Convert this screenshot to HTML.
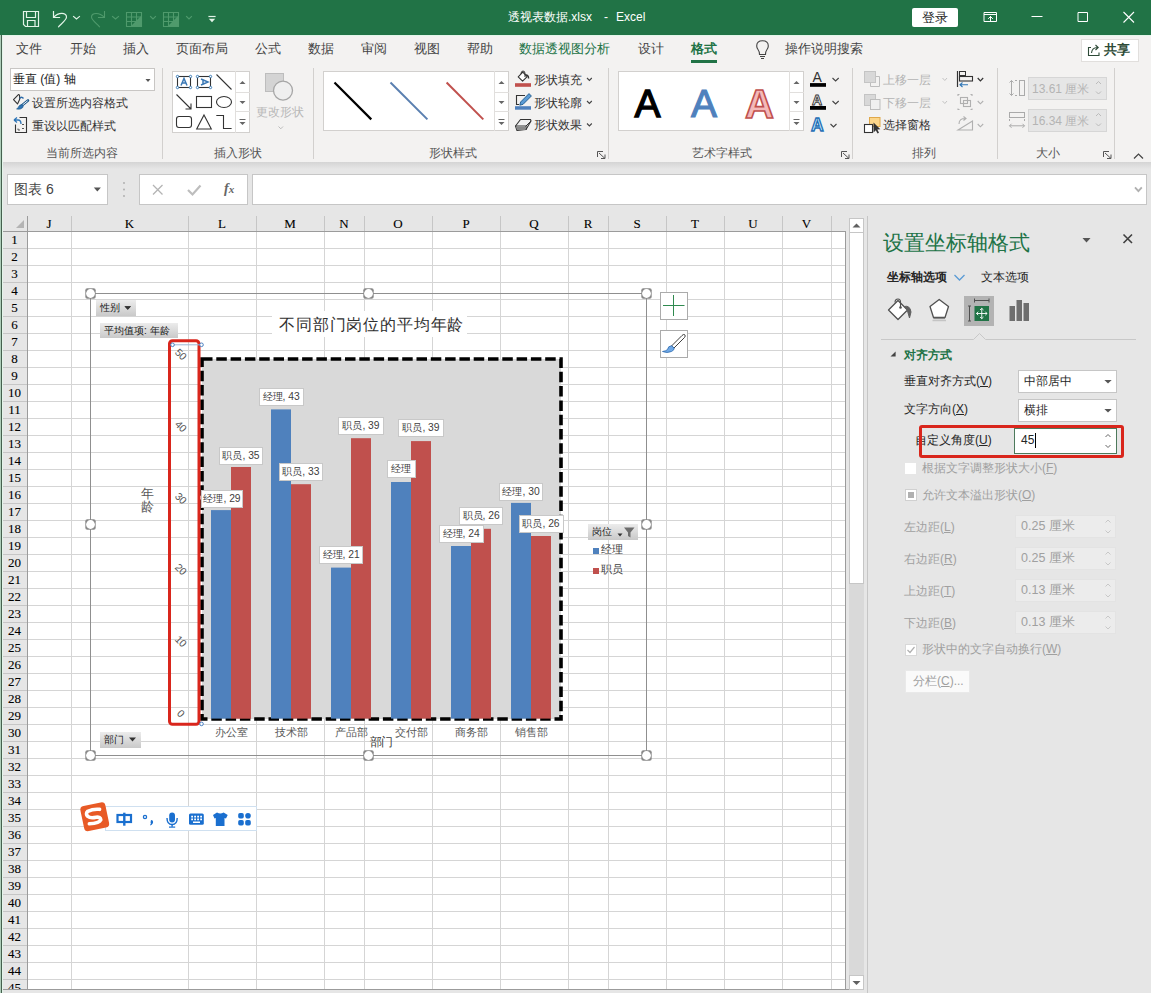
<!DOCTYPE html><html><head><meta charset="utf-8"><style>
*{box-sizing:border-box}
body{margin:0;width:1151px;height:993px;position:relative;overflow:hidden;background:#e6e6e6;font-family:'Liberation Sans',sans-serif;color:#262626}
.ab{position:absolute}
.t{position:absolute;white-space:nowrap;line-height:1}
</style></head><body>
<div class="ab" style="left:0;top:0;width:1151px;height:35px;background:#217346"></div>
<div class="t" style="left:508px;top:11px;font-size:12px;color:#fff">透视表数据.xlsx</div>
<div class="t" style="left:604px;top:11px;font-size:12px;color:#fff">-</div>
<div class="t" style="left:616px;top:11px;font-size:12px;color:#fff">Excel</div>
<div class="ab" style="left:912px;top:8px;width:46px;height:19px;background:#fff;border-radius:2px"></div>
<div class="t" style="left:922px;top:11px;font-size:13px;color:#262626">登录</div>
<svg class="ab" style="left:0;top:0" width="1151" height="35" fill="none" stroke-linecap="square">
<path d="M23.5 11.5 H38.5 V26.5 H25.5 L23.5 24.5 Z" stroke="#e3f4e8" stroke-width="1.2"/>
<path d="M26.5 11.5 V17.5 H35.5 V11.5" stroke="#e3f4e8" stroke-width="1.2"/>
<path d="M27.5 26.5 V20.5 H35 V26.5" stroke="#e3f4e8" stroke-width="1.2"/>
<path d="M53.5 11.5 V17.5 H59.5" stroke="#e3f4e8" stroke-width="1.2"/>
<path d="M54 17 C58 12.5 66.5 12 66.5 17 C66.5 20 61 24 58.5 26.8" stroke="#e3f4e8" stroke-width="1.2" stroke-linecap="round"/>
<path d="M73.5 16.5 L76.5 19 L79.5 16.5" stroke="#e3f4e8" stroke-width="1.1"/>
<g stroke="#4f9a6c" stroke-width="1.1">
<path d="M104 17 C100 12.5 91.5 12 91.5 17 C91.5 20 97 24 99.5 26.8"/>
<path d="M104.5 11.5 V17.5 H98.5"/>
<path d="M112.5 16.5 L115.5 19 L118.5 16.5"/>
<path d="M126.5 12.5 H141.5 V26.5 H126.5 Z M126.5 17 H141.5 M126.5 21.5 H141.5 M131.5 12.5 V26.5 M136.5 12.5 V26.5"/><path d="M131 26 L141 16 V26 Z" fill="#4f9a6c" stroke="none"/>
<path d="M150.5 16.5 L153 19 L155.5 16.5"/>
<path d="M163.5 12.5 H178.5 V26.5 H163.5 Z M163.5 17 H178.5 M163.5 21.5 H178.5 M168.5 12.5 V26.5 M173.5 12.5 V26.5"/><path d="M168 26 L178 16 V26 Z" fill="#4f9a6c" stroke="none"/>
<path d="M186.5 16.5 L189 19 L191.5 16.5"/>
</g>
<path d="M209 16.5 H215" stroke="#e3f4e8" stroke-width="1.2"/>
<path d="M208.8 18.8 H215.2 L212 22.3 Z" fill="#e3f4e8" stroke="none"/>
<path d="M984.5 12.5 H996.5 V21.5 H984.5 Z M984.5 14.5 H996.5" stroke="#fff" stroke-width="1"/>
<path d="M990.5 21 V16.5 M988.5 18.5 L990.5 16.5 L992.5 18.5" stroke="#fff" stroke-width="1"/>
<path d="M1032 16.5 H1042" stroke="#fff" stroke-width="1"/>
<path d="M1078.5 12.5 H1087.5 V21.5 H1078.5 Z" stroke="#fff" stroke-width="1"/>
<path d="M1123.5 12 L1134 22.5 M1134 12 L1123.5 22.5" stroke="#fff" stroke-width="1.1" stroke-linecap="butt"/>
</svg>
<div class="ab" style="left:0;top:35px;width:1151px;height:128px;background:#f3f2f1"></div>
<div class="t" style="left:16px;top:42px;font-size:13px;color:#444">文件</div>
<div class="t" style="left:70px;top:42px;font-size:13px;color:#444">开始</div>
<div class="t" style="left:123px;top:42px;font-size:13px;color:#444">插入</div>
<div class="t" style="left:176px;top:42px;font-size:13px;color:#444">页面布局</div>
<div class="t" style="left:255px;top:42px;font-size:13px;color:#444">公式</div>
<div class="t" style="left:308px;top:42px;font-size:13px;color:#444">数据</div>
<div class="t" style="left:361px;top:42px;font-size:13px;color:#444">审阅</div>
<div class="t" style="left:414px;top:42px;font-size:13px;color:#444">视图</div>
<div class="t" style="left:467px;top:42px;font-size:13px;color:#444">帮助</div>
<div class="t" style="left:519px;top:42px;font-size:13px;color:#217346">数据透视图分析</div>
<div class="t" style="left:638px;top:42px;font-size:13px;color:#444">设计</div>
<div class="t" style="left:691px;top:42px;font-size:13px;color:#217346;font-weight:bold">格式</div>
<div class="ab" style="left:691px;top:60px;width:26px;height:3px;background:#217346"></div>
<div class="t" style="left:785px;top:42px;font-size:13px;color:#444">操作说明搜索</div>
<div class="ab" style="left:1081px;top:39px;width:58px;height:23px;background:#fff;border:1px solid #e1dfdd"></div>
<div class="t" style="left:1104px;top:43px;font-size:13px;color:#2d4a37;font-weight:bold">共享</div>
<div class="ab" style="left:0;top:35px;width:1151px;height:1px;background:#e3f6ea"></div>
<div class="ab" style="left:162px;top:68px;width:1px;height:91px;background:#d2d0ce"></div>
<div class="ab" style="left:313px;top:68px;width:1px;height:91px;background:#d2d0ce"></div>
<div class="ab" style="left:608px;top:68px;width:1px;height:91px;background:#d2d0ce"></div>
<div class="ab" style="left:852px;top:68px;width:1px;height:91px;background:#d2d0ce"></div>
<div class="ab" style="left:997px;top:68px;width:1px;height:91px;background:#d2d0ce"></div>
<div class="ab" style="left:1114px;top:68px;width:1px;height:91px;background:#d2d0ce"></div>
<div class="t" style="left:46px;top:147px;font-size:12px;color:#555;">当前所选内容</div>
<div class="t" style="left:214px;top:147px;font-size:12px;color:#555;">插入形状</div>
<div class="t" style="left:429px;top:147px;font-size:12px;color:#555;">形状样式</div>
<div class="t" style="left:692px;top:147px;font-size:12px;color:#555;">艺术字样式</div>
<div class="t" style="left:912px;top:147px;font-size:12px;color:#555;">排列</div>
<div class="t" style="left:1036px;top:147px;font-size:12px;color:#555;">大小</div>
<div class="ab" style="left:10px;top:68px;width:145px;height:23px;background:#fff;border:1px solid #c8c6c4"></div>
<div class="t" style="left:13px;top:73px;font-size:12px;color:#222;">垂直 (值) 轴</div>
<div class="t" style="left:32px;top:97px;font-size:12px;color:#333;">设置所选内容格式</div>
<div class="t" style="left:32px;top:120px;font-size:12px;color:#333;">重设以匹配样式</div>
<div class="ab" style="left:172px;top:71px;width:78px;height:62px;background:#fff;border:1px solid #d2d0ce"></div>
<div class="ab" style="left:235px;top:71px;width:1px;height:62px;background:#e1dfdd"></div>
<div class="ab" style="left:235px;top:92px;width:15px;height:1px;background:#e1dfdd"></div>
<div class="ab" style="left:235px;top:111px;width:15px;height:1px;background:#e1dfdd"></div>
<div class="t" style="left:256px;top:106px;font-size:12px;color:#b8b8b8;">更改形状</div>
<div class="ab" style="left:323px;top:71px;width:186px;height:60px;background:#fff;border:1px solid #d2d0ce"></div>
<div class="ab" style="left:494px;top:71px;width:1px;height:60px;background:#e1dfdd"></div>
<div class="ab" style="left:494px;top:92px;width:15px;height:1px;background:#e1dfdd"></div>
<div class="ab" style="left:494px;top:111px;width:15px;height:1px;background:#e1dfdd"></div>
<div class="t" style="left:534px;top:74px;font-size:12px;color:#333;">形状填充</div>
<div class="t" style="left:534px;top:97px;font-size:12px;color:#333;">形状轮廓</div>
<div class="t" style="left:534px;top:119px;font-size:12px;color:#333;">形状效果</div>
<div class="ab" style="left:618px;top:71px;width:186px;height:60px;background:#fff;border:1px solid #d2d0ce"></div>
<div class="ab" style="left:789px;top:71px;width:1px;height:60px;background:#e1dfdd"></div>
<div class="ab" style="left:789px;top:92px;width:15px;height:1px;background:#e1dfdd"></div>
<div class="ab" style="left:789px;top:111px;width:15px;height:1px;background:#e1dfdd"></div>
<div class="t" style="left:883px;top:74px;font-size:12px;color:#b4b4b4;">上移一层</div>
<div class="t" style="left:883px;top:97px;font-size:12px;color:#b4b4b4;">下移一层</div>
<div class="t" style="left:883px;top:119px;font-size:12px;color:#333;">选择窗格</div>
<div class="ab" style="left:1028px;top:77px;width:79px;height:23px;background:#e6e6e6;border:1px solid #d6d6d6"></div>
<div class="ab" style="left:1028px;top:109px;width:79px;height:23px;background:#e6e6e6;border:1px solid #d6d6d6"></div>
<div class="t" style="left:1032px;top:83px;font-size:12px;color:#b4b4b4;">13.61 厘米</div>
<div class="t" style="left:1032px;top:115px;font-size:12px;color:#b4b4b4;">16.34 厘米</div>
<svg class="ab" style="left:0;top:64px" width="1151" height="100" viewBox="0 64 1151 100" fill="none">
<!-- group1 -->
<path d="M13.5 99.7 L18.4 94.6 Q19.6 94.5 19.6 96 L19.6 99.5 L17.5 103.9 Z" stroke="#333" stroke-width="1.1" stroke-linejoin="round"/>
<path d="M19.6 98.5 Q21.5 96 23.5 98.5" stroke="#2b6aa8" stroke-width="1.4"/>
<path d="M28 100.5 L21.5 105.8" stroke="#1f5a8c" stroke-width="2.6" stroke-linecap="round"/><path d="M27.6 100.8 L22 105.4" stroke="#fff" stroke-width="0.9"/><path d="M22.5 104.6 Q19 104.8 18.5 107 Q18 108.5 16.6 108.9 Q20.5 110 22.8 107.5 Q23.6 106.3 22.5 104.6 Z" fill="#2e75b6" stroke="#1f5a8c" stroke-width="0.7"/>
<path d="M19.5 117.5 H26.5 V132.5 H15.5 V124.5" stroke="#333" stroke-width="1.1"/>
<path d="M14 120 L17 117.5 M14 120 L17 122.5 M14 120 H18 Q21 120 21 124" stroke="#2e75b6" stroke-width="1.3"/>
<path d="M18 128.5 V130 H20 M22 128.5 H24 M22 124.5 H24" stroke="#555" stroke-width="1"/>
<!-- dropdown arrow g1 -->
<path d="M145.5 79 H150.5 L148 82 Z" fill="#555"/>
<!-- group2 shapes -->
<rect x="177.5" y="76.5" width="13" height="11" stroke="#333" stroke-width="1.1"/>
<g fill="#fff" stroke="#2e75b6" stroke-width="0.9"><circle cx="177.5" cy="76.5" r="1.2"/><circle cx="190.5" cy="76.5" r="1.2"/><circle cx="177.5" cy="87.5" r="1.2"/><circle cx="190.5" cy="87.5" r="1.2"/></g>
<path d="M181 85.5 L184 78.5 L187 85.5 M182 83 H186" stroke="#3a78b5" stroke-width="1.5"/>
<rect x="197.5" y="76.5" width="13" height="11" stroke="#333" stroke-width="1.1"/>
<g fill="#fff" stroke="#2e75b6" stroke-width="0.9"><circle cx="197.5" cy="76.5" r="1.2"/><circle cx="210.5" cy="76.5" r="1.2"/><circle cx="197.5" cy="87.5" r="1.2"/><circle cx="210.5" cy="87.5" r="1.2"/></g>
<path d="M201 79 L208 82 L201 85 M203 80 V84" stroke="#3a78b5" stroke-width="1.5"/>
<path d="M216.5 74.5 L231.5 89.5" stroke="#333" stroke-width="1.1"/>
<path d="M176.5 94.5 L191 109 M191 103.5 V109 H185.5" stroke="#333" stroke-width="1.1"/>
<rect x="196.5" y="96.5" width="15" height="11" stroke="#333" stroke-width="1.1"/>
<ellipse cx="224" cy="102" rx="7.5" ry="5.5" stroke="#333" stroke-width="1.1"/>
<rect x="176.5" y="116.5" width="15" height="11" rx="2.5" stroke="#333" stroke-width="1.1"/>
<path d="M204 115 L211.3 129 H196.7 Z" stroke="#333" stroke-width="1.1" stroke-linejoin="miter"/>
<path d="M216.3 115.5 H223.5 V128.5 H231.6" stroke="#333" stroke-width="1.1"/>
<g fill="#666"><path d="M239.5 84 L242.5 81 L245.5 84 Z"/><path d="M239.5 101 H245.5 L242.5 104 Z"/><path d="M239.5 119 H245.5 V120 H239.5 Z M239.5 122 H245.5 L242.5 125 Z"/></g>
<!-- change shape -->
<rect x="265.5" y="73.5" width="18" height="18" fill="#d4d4d4" stroke="#bdbdbd"/>
<circle cx="283" cy="90.6" r="9.5" fill="#efefef" stroke="#a6a6a6" stroke-width="1.3"/>
<path d="M278.5 126.5 L280.8 128.8 L283 126.5" stroke="#bbb" stroke-width="1"/>
<!-- group3 lines -->
<path d="M334.5 82.5 L371.3 119.4" stroke="#000" stroke-width="2.2"/>
<path d="M390.5 82.5 L427.4 119.4" stroke="#5a7fb0" stroke-width="2"/>
<path d="M446.6 82.5 L483.3 119.4" stroke="#c0504d" stroke-width="2"/>
<g fill="#666"><path d="M498.5 84 L501.5 81 L504.5 84 Z"/><path d="M498.5 101 H504.5 L501.5 104 Z"/><path d="M498.5 119 H504.5 V120 H498.5 Z M498.5 122 H504.5 L501.5 125 Z"/></g>
<!-- fill/outline/effect icons -->
<path d="M518.2 76.8 L522.8 72.2 L527.2 76.6 L522.6 81.2 Z" fill="#fff" stroke="#333" stroke-width="1.1" stroke-linejoin="round"/><path d="M521 74 Q521 71 523 71 Q525 71 525 73.5 V77" stroke="#333" stroke-width="1"/>
<path d="M525.5 75 Q528.5 74.5 528.6 78.5" stroke="#333" stroke-width="1.4"/>
<rect x="515" y="83.2" width="16" height="3.6" fill="#c0504d"/>
<path d="M525 95.5 H516.5 V104.5 H519" stroke="#333" stroke-width="1.1"/>
<path d="M529 93.6 L531.4 96 L523 104.4 L519.8 105.2 L520.6 102 Z" fill="#5b9bd5" stroke="#1f5a8c" stroke-width="0.9" stroke-linejoin="round"/>
<rect x="515" y="106.2" width="16" height="3.5" fill="#4f81bd"/>
<path d="M515.5 126 L520.5 119.5 H530.5 L531 121 L526 129.5 L517 130.5 Z" fill="#f0f0f0" stroke="#333" stroke-width="1.1" stroke-linejoin="round"/>
<path d="M515.5 126 H526 L531 121 M526 126 V130" stroke="#333" stroke-width="1"/>
<path d="M516 127 H525.5 V130 H517 Z" fill="#888"/>
<g stroke="#444" stroke-width="1.1"><path d="M587 78 L589.4 80.5 L591.8 78"/><path d="M587 101 L589.4 103.5 L591.8 101"/><path d="M587 123.5 L589.4 126 L591.8 123.5"/></g>
<path d="M597.5 151.5 H603 M597.5 151.5 V157 M599 153 L605 158.5 M605 154.5 V158.5 H601" stroke="#555" stroke-width="1"/>
<!-- wordart gallery -->
<text x="634.5" y="116.8" font-family="Liberation Sans" font-size="39" fill="#000" stroke="#000" stroke-width="1.3">A</text>
<text x="691" y="116.8" font-family="Liberation Sans" font-size="39" fill="#4f81bd" stroke="#4f81bd" stroke-width="1.1">A</text>
<text x="745" y="117.5" font-family="Liberation Sans" font-weight="bold" font-size="40" fill="#f4b9b9" stroke="#c0504d" stroke-width="1.6">A</text>
<g fill="#666"><path d="M793.5 84 L796.5 81 L799.5 84 Z"/><path d="M793.5 101 H799.5 L796.5 104 Z"/><path d="M793.5 119 H799.5 V120 H793.5 Z M793.5 122 H799.5 L796.5 125 Z"/></g>
<text x="812.5" y="81.5" font-family="Liberation Sans" font-size="14" fill="#333">A</text>
<rect x="810" y="83.1" width="16" height="3.7" fill="#000"/>
<text x="812" y="104.5" font-family="Liberation Sans" font-weight="bold" font-size="14" fill="#fff" stroke="#333" stroke-width="0.9">A</text>
<rect x="810" y="106" width="16" height="3.8" fill="#000"/>
<text x="811" y="130.7" font-family="Liberation Sans" font-weight="bold" font-size="17.5" fill="#c9ecff" stroke="#1f6fb5" stroke-width="1.3">A</text>
<g stroke="#444" stroke-width="1.1"><path d="M832.5 78 L835.6 81 L838.7 78"/><path d="M832.5 101 L835.6 104 L838.7 101"/><path d="M830.5 124 L833.5 127 L836.5 124"/></g>
<path d="M841.5 151.5 H847 M841.5 151.5 V157 M843 153 L849 158.5 M849 154.5 V158.5 H845" stroke="#555" stroke-width="1"/>
<!-- arrange -->
<rect x="864.5" y="71.5" width="11" height="11" fill="#d8d8d8" stroke="#c4c4c4"/>
<path d="M876 76.5 H879.5 V86.5 H870.5 V83" stroke="#bdbdbd" stroke-width="1"/>
<rect x="864.5" y="94.5" width="11" height="11" fill="#d8d8d8" stroke="#c4c4c4"/>
<rect x="870.5" y="99.5" width="9.5" height="10" fill="#f0f0f0" stroke="#bdbdbd"/>
<rect x="869.5" y="117.5" width="10.5" height="9" fill="#fcd68a" stroke="#e0a84a"/>
<rect x="864.5" y="124.5" width="8" height="8" fill="#fff" stroke="#333" stroke-width="1.1"/>
<path d="M873.5 122.5 V132.5 L875.8 130.3 L877.5 133.5 L879 132.8 L877.3 129.5 L880.3 129.3 Z" fill="#333"/>
<g stroke="#c4c4c4" stroke-width="1"><path d="M942.5 78 L944.8 80.5 L947 78"/><path d="M942.5 101 L944.8 103.5 L947 101"/></g>
<path d="M957.5 71 V87" stroke="#333" stroke-width="1.2"/>
<rect x="959.5" y="71.5" width="6" height="4" stroke="#333" stroke-width="1"/>
<rect x="959.5" y="76.5" width="13" height="4.5" stroke="#333" stroke-width="1.1"/>
<path d="M968 84.7 H960 M962.5 82.5 L960 84.7 L962.5 87" stroke="#2e75b6" stroke-width="1.1"/>
<path d="M977.7 78 L980.4 80.8 L983.2 78" stroke="#333" stroke-width="1.2"/>
<g stroke="#b0b0b0" stroke-width="1.1">
<path d="M958 94 V96 M972 94 V96 M958 108.5 V110 M972 108.5 V110 M957.5 94.5 H959.5 M970.5 94.5 H972.5 M957.5 109.5 H959.5 M970.5 109.5 H972.5" />
<rect x="960.5" y="97.5" width="7" height="6"/><rect x="963.5" y="100.5" width="7" height="6"/>
<path d="M977.7 101 L980.4 103.8 L983.2 101"/>
<path d="M958 130 L972.5 121 V130 Z"/>
<path d="M959 124 Q959 118 966 118.5 M963.5 116.5 L966 118.5 L963.5 120.5"/>
<path d="M977.7 124 L980.4 126.8 L983.2 124"/>
</g>
<!-- size -->
<g stroke="#aaa" stroke-width="1">
<path d="M1011.5 80.5 V95.5 M1009.5 82.5 L1011.5 80.5 L1013.5 82.5 M1009.5 93.5 L1011.5 95.5 L1013.5 93.5"/>
<path d="M1015 80.5 H1017 M1015 95.5 H1017"/>
<rect x="1019.5" y="80.5" width="5" height="15"/>
<rect x="1009.5" y="112.5" width="15" height="5"/>
<path d="M1009.5 119 V121 M1024.5 119 V121 M1009.5 125.8 H1024.5 M1011.5 123.8 L1009.5 125.8 L1011.5 127.8 M1022.5 123.8 L1024.5 125.8 L1022.5 127.8"/>
</g>
<g stroke="#bbb" stroke-width="1"><path d="M1096 84 L1098.5 81.5 L1101 84 M1096 91.5 L1098.5 94 L1101 91.5"/><path d="M1096 116 L1098.5 113.5 L1101 116 M1096 123.5 L1098.5 126 L1101 123.5"/></g>
<path d="M1103.5 151.5 H1109 M1103.5 151.5 V157 M1105 153 L1111 158.5 M1111 154.5 V158.5 H1107" stroke="#555" stroke-width="1"/>
<path d="M1134 158.5 L1138.5 154 L1143 158.5" stroke="#444" stroke-width="1.2"/>
</svg>
<svg class="ab" style="left:740px;top:36px" width="411" height="30" viewBox="740 36 411 30" fill="none">
<path d="M759.5 54.5 Q759.5 51.5 758 49.5 Q756.7 47.8 756.7 46 Q756.7 40.8 762.5 40.8 Q768.3 40.8 768.3 46 Q768.3 47.8 767 49.5 Q765.5 51.5 765.5 54.5 Z" stroke="#444" stroke-width="1.1"/>
<path d="M760 56.5 H765 M761 58.5 H764" stroke="#444" stroke-width="1.1"/>
<path d="M1091 47.5 H1088.5 V55.5 H1099 V52.5" stroke="#2d4a37" stroke-width="1.1"/>
<path d="M1091.5 53 Q1092 47.5 1097.5 47.5 M1095.5 45 L1098.2 47.5 L1095.5 50" stroke="#2d4a37" stroke-width="1.1"/>
</svg>
<div class="ab" style="left:0;top:162px;width:1151px;height:7px;background:linear-gradient(#d4d4d4,#e6e6e6)"></div>
<div class="ab" style="left:7px;top:174px;width:101px;height:31px;background:#fff;border:1px solid #c6c6c6"></div>
<div class="t" style="left:14px;top:182px;font-size:14px;color:#444">图表 6</div>
<div class="ab" style="left:139px;top:174px;width:109px;height:31px;background:#fff;border:1px solid #c6c6c6"></div>
<div class="ab" style="left:252px;top:174px;width:895px;height:31px;background:#fff;border:1px solid #c6c6c6"></div>
<div class="ab" style="left:27px;top:231px;width:819px;height:762px;background:#fff"></div>
<svg class="ab" style="left:0;top:0" width="1151" height="993"><line x1="71.5" y1="231" x2="71.5" y2="993" stroke="#d5d5d5"/><line x1="71.5" y1="216" x2="71.5" y2="231" stroke="#c6c6c6"/><line x1="188.5" y1="231" x2="188.5" y2="993" stroke="#d5d5d5"/><line x1="188.5" y1="216" x2="188.5" y2="231" stroke="#c6c6c6"/><line x1="256.5" y1="231" x2="256.5" y2="993" stroke="#d5d5d5"/><line x1="256.5" y1="216" x2="256.5" y2="231" stroke="#c6c6c6"/><line x1="324.5" y1="231" x2="324.5" y2="993" stroke="#d5d5d5"/><line x1="324.5" y1="216" x2="324.5" y2="231" stroke="#c6c6c6"/><line x1="364.5" y1="231" x2="364.5" y2="993" stroke="#d5d5d5"/><line x1="364.5" y1="216" x2="364.5" y2="231" stroke="#c6c6c6"/><line x1="432.5" y1="231" x2="432.5" y2="993" stroke="#d5d5d5"/><line x1="432.5" y1="216" x2="432.5" y2="231" stroke="#c6c6c6"/><line x1="500.5" y1="231" x2="500.5" y2="993" stroke="#d5d5d5"/><line x1="500.5" y1="216" x2="500.5" y2="231" stroke="#c6c6c6"/><line x1="568.5" y1="231" x2="568.5" y2="993" stroke="#d5d5d5"/><line x1="568.5" y1="216" x2="568.5" y2="231" stroke="#c6c6c6"/><line x1="608.5" y1="231" x2="608.5" y2="993" stroke="#d5d5d5"/><line x1="608.5" y1="216" x2="608.5" y2="231" stroke="#c6c6c6"/><line x1="666.5" y1="231" x2="666.5" y2="993" stroke="#d5d5d5"/><line x1="666.5" y1="216" x2="666.5" y2="231" stroke="#c6c6c6"/><line x1="724.5" y1="231" x2="724.5" y2="993" stroke="#d5d5d5"/><line x1="724.5" y1="216" x2="724.5" y2="231" stroke="#c6c6c6"/><line x1="782.5" y1="231" x2="782.5" y2="993" stroke="#d5d5d5"/><line x1="782.5" y1="216" x2="782.5" y2="231" stroke="#c6c6c6"/><line x1="831.5" y1="231" x2="831.5" y2="993" stroke="#d5d5d5"/><line x1="831.5" y1="216" x2="831.5" y2="231" stroke="#c6c6c6"/><line x1="27" y1="248.5" x2="845" y2="248.5" stroke="#d5d5d5"/><line x1="2" y1="248.5" x2="27" y2="248.5" stroke="#c6c6c6"/><line x1="27" y1="265.5" x2="845" y2="265.5" stroke="#d5d5d5"/><line x1="2" y1="265.5" x2="27" y2="265.5" stroke="#c6c6c6"/><line x1="27" y1="282.5" x2="845" y2="282.5" stroke="#d5d5d5"/><line x1="2" y1="282.5" x2="27" y2="282.5" stroke="#c6c6c6"/><line x1="27" y1="299.5" x2="845" y2="299.5" stroke="#d5d5d5"/><line x1="2" y1="299.5" x2="27" y2="299.5" stroke="#c6c6c6"/><line x1="27" y1="316.5" x2="845" y2="316.5" stroke="#d5d5d5"/><line x1="2" y1="316.5" x2="27" y2="316.5" stroke="#c6c6c6"/><line x1="27" y1="333.5" x2="845" y2="333.5" stroke="#d5d5d5"/><line x1="2" y1="333.5" x2="27" y2="333.5" stroke="#c6c6c6"/><line x1="27" y1="350.5" x2="845" y2="350.5" stroke="#d5d5d5"/><line x1="2" y1="350.5" x2="27" y2="350.5" stroke="#c6c6c6"/><line x1="27" y1="367.5" x2="845" y2="367.5" stroke="#d5d5d5"/><line x1="2" y1="367.5" x2="27" y2="367.5" stroke="#c6c6c6"/><line x1="27" y1="384.5" x2="845" y2="384.5" stroke="#d5d5d5"/><line x1="2" y1="384.5" x2="27" y2="384.5" stroke="#c6c6c6"/><line x1="27" y1="401.5" x2="845" y2="401.5" stroke="#d5d5d5"/><line x1="2" y1="401.5" x2="27" y2="401.5" stroke="#c6c6c6"/><line x1="27" y1="418.5" x2="845" y2="418.5" stroke="#d5d5d5"/><line x1="2" y1="418.5" x2="27" y2="418.5" stroke="#c6c6c6"/><line x1="27" y1="435.5" x2="845" y2="435.5" stroke="#d5d5d5"/><line x1="2" y1="435.5" x2="27" y2="435.5" stroke="#c6c6c6"/><line x1="27" y1="452.5" x2="845" y2="452.5" stroke="#d5d5d5"/><line x1="2" y1="452.5" x2="27" y2="452.5" stroke="#c6c6c6"/><line x1="27" y1="469.5" x2="845" y2="469.5" stroke="#d5d5d5"/><line x1="2" y1="469.5" x2="27" y2="469.5" stroke="#c6c6c6"/><line x1="27" y1="486.5" x2="845" y2="486.5" stroke="#d5d5d5"/><line x1="2" y1="486.5" x2="27" y2="486.5" stroke="#c6c6c6"/><line x1="27" y1="503.5" x2="845" y2="503.5" stroke="#d5d5d5"/><line x1="2" y1="503.5" x2="27" y2="503.5" stroke="#c6c6c6"/><line x1="27" y1="520.5" x2="845" y2="520.5" stroke="#d5d5d5"/><line x1="2" y1="520.5" x2="27" y2="520.5" stroke="#c6c6c6"/><line x1="27" y1="537.5" x2="845" y2="537.5" stroke="#d5d5d5"/><line x1="2" y1="537.5" x2="27" y2="537.5" stroke="#c6c6c6"/><line x1="27" y1="554.5" x2="845" y2="554.5" stroke="#d5d5d5"/><line x1="2" y1="554.5" x2="27" y2="554.5" stroke="#c6c6c6"/><line x1="27" y1="571.5" x2="845" y2="571.5" stroke="#d5d5d5"/><line x1="2" y1="571.5" x2="27" y2="571.5" stroke="#c6c6c6"/><line x1="27" y1="588.5" x2="845" y2="588.5" stroke="#d5d5d5"/><line x1="2" y1="588.5" x2="27" y2="588.5" stroke="#c6c6c6"/><line x1="27" y1="605.5" x2="845" y2="605.5" stroke="#d5d5d5"/><line x1="2" y1="605.5" x2="27" y2="605.5" stroke="#c6c6c6"/><line x1="27" y1="622.5" x2="845" y2="622.5" stroke="#d5d5d5"/><line x1="2" y1="622.5" x2="27" y2="622.5" stroke="#c6c6c6"/><line x1="27" y1="639.5" x2="845" y2="639.5" stroke="#d5d5d5"/><line x1="2" y1="639.5" x2="27" y2="639.5" stroke="#c6c6c6"/><line x1="27" y1="656.5" x2="845" y2="656.5" stroke="#d5d5d5"/><line x1="2" y1="656.5" x2="27" y2="656.5" stroke="#c6c6c6"/><line x1="27" y1="673.5" x2="845" y2="673.5" stroke="#d5d5d5"/><line x1="2" y1="673.5" x2="27" y2="673.5" stroke="#c6c6c6"/><line x1="27" y1="690.5" x2="845" y2="690.5" stroke="#d5d5d5"/><line x1="2" y1="690.5" x2="27" y2="690.5" stroke="#c6c6c6"/><line x1="27" y1="707.5" x2="845" y2="707.5" stroke="#d5d5d5"/><line x1="2" y1="707.5" x2="27" y2="707.5" stroke="#c6c6c6"/><line x1="27" y1="724.5" x2="845" y2="724.5" stroke="#d5d5d5"/><line x1="2" y1="724.5" x2="27" y2="724.5" stroke="#c6c6c6"/><line x1="27" y1="741.5" x2="845" y2="741.5" stroke="#d5d5d5"/><line x1="2" y1="741.5" x2="27" y2="741.5" stroke="#c6c6c6"/><line x1="27" y1="758.5" x2="845" y2="758.5" stroke="#d5d5d5"/><line x1="2" y1="758.5" x2="27" y2="758.5" stroke="#c6c6c6"/><line x1="27" y1="775.5" x2="845" y2="775.5" stroke="#d5d5d5"/><line x1="2" y1="775.5" x2="27" y2="775.5" stroke="#c6c6c6"/><line x1="27" y1="792.5" x2="845" y2="792.5" stroke="#d5d5d5"/><line x1="2" y1="792.5" x2="27" y2="792.5" stroke="#c6c6c6"/><line x1="27" y1="809.5" x2="845" y2="809.5" stroke="#d5d5d5"/><line x1="2" y1="809.5" x2="27" y2="809.5" stroke="#c6c6c6"/><line x1="27" y1="826.5" x2="845" y2="826.5" stroke="#d5d5d5"/><line x1="2" y1="826.5" x2="27" y2="826.5" stroke="#c6c6c6"/><line x1="27" y1="843.5" x2="845" y2="843.5" stroke="#d5d5d5"/><line x1="2" y1="843.5" x2="27" y2="843.5" stroke="#c6c6c6"/><line x1="27" y1="860.5" x2="845" y2="860.5" stroke="#d5d5d5"/><line x1="2" y1="860.5" x2="27" y2="860.5" stroke="#c6c6c6"/><line x1="27" y1="877.5" x2="845" y2="877.5" stroke="#d5d5d5"/><line x1="2" y1="877.5" x2="27" y2="877.5" stroke="#c6c6c6"/><line x1="27" y1="894.5" x2="845" y2="894.5" stroke="#d5d5d5"/><line x1="2" y1="894.5" x2="27" y2="894.5" stroke="#c6c6c6"/><line x1="27" y1="911.5" x2="845" y2="911.5" stroke="#d5d5d5"/><line x1="2" y1="911.5" x2="27" y2="911.5" stroke="#c6c6c6"/><line x1="27" y1="928.5" x2="845" y2="928.5" stroke="#d5d5d5"/><line x1="2" y1="928.5" x2="27" y2="928.5" stroke="#c6c6c6"/><line x1="27" y1="945.5" x2="845" y2="945.5" stroke="#d5d5d5"/><line x1="2" y1="945.5" x2="27" y2="945.5" stroke="#c6c6c6"/><line x1="27" y1="962.5" x2="845" y2="962.5" stroke="#d5d5d5"/><line x1="2" y1="962.5" x2="27" y2="962.5" stroke="#c6c6c6"/><line x1="27" y1="979.5" x2="845" y2="979.5" stroke="#d5d5d5"/><line x1="2" y1="979.5" x2="27" y2="979.5" stroke="#c6c6c6"/><line x1="27" y1="996.5" x2="845" y2="996.5" stroke="#d5d5d5"/><line x1="2" y1="996.5" x2="27" y2="996.5" stroke="#c6c6c6"/><line x1="2" y1="231.5" x2="846" y2="231.5" stroke="#9b9b9b"/><line x1="27.5" y1="216" x2="27.5" y2="993" stroke="#9b9b9b"/><line x1="845.5" y1="231" x2="845.5" y2="993" stroke="#9b9b9b"/><path d="M16 228 L24 228 L24 220 Z" fill="#b4b4b4"/></svg>
<div class="t" style="left:39.0px;width:20px;text-align:center;top:217px;font-size:13px;font-family:'Liberation Serif';font-size:13px;color:#000;-webkit-text-stroke:0.1px #000">J</div>
<div class="t" style="left:119.5px;width:20px;text-align:center;top:217px;font-size:13px;font-family:'Liberation Serif';font-size:13px;color:#000;-webkit-text-stroke:0.1px #000">K</div>
<div class="t" style="left:212.0px;width:20px;text-align:center;top:217px;font-size:13px;font-family:'Liberation Serif';font-size:13px;color:#000;-webkit-text-stroke:0.1px #000">L</div>
<div class="t" style="left:280.0px;width:20px;text-align:center;top:217px;font-size:13px;font-family:'Liberation Serif';font-size:13px;color:#000;-webkit-text-stroke:0.1px #000">M</div>
<div class="t" style="left:334.0px;width:20px;text-align:center;top:217px;font-size:13px;font-family:'Liberation Serif';font-size:13px;color:#000;-webkit-text-stroke:0.1px #000">N</div>
<div class="t" style="left:388.0px;width:20px;text-align:center;top:217px;font-size:13px;font-family:'Liberation Serif';font-size:13px;color:#000;-webkit-text-stroke:0.1px #000">O</div>
<div class="t" style="left:456.0px;width:20px;text-align:center;top:217px;font-size:13px;font-family:'Liberation Serif';font-size:13px;color:#000;-webkit-text-stroke:0.1px #000">P</div>
<div class="t" style="left:524.0px;width:20px;text-align:center;top:217px;font-size:13px;font-family:'Liberation Serif';font-size:13px;color:#000;-webkit-text-stroke:0.1px #000">Q</div>
<div class="t" style="left:578.0px;width:20px;text-align:center;top:217px;font-size:13px;font-family:'Liberation Serif';font-size:13px;color:#000;-webkit-text-stroke:0.1px #000">R</div>
<div class="t" style="left:627.0px;width:20px;text-align:center;top:217px;font-size:13px;font-family:'Liberation Serif';font-size:13px;color:#000;-webkit-text-stroke:0.1px #000">S</div>
<div class="t" style="left:685.0px;width:20px;text-align:center;top:217px;font-size:13px;font-family:'Liberation Serif';font-size:13px;color:#000;-webkit-text-stroke:0.1px #000">T</div>
<div class="t" style="left:743.0px;width:20px;text-align:center;top:217px;font-size:13px;font-family:'Liberation Serif';font-size:13px;color:#000;-webkit-text-stroke:0.1px #000">U</div>
<div class="t" style="left:796.5px;width:20px;text-align:center;top:217px;font-size:13px;font-family:'Liberation Serif';font-size:13px;color:#000;-webkit-text-stroke:0.1px #000">V</div>
<div class="t" style="left:2px;width:25px;text-align:center;top:233px;font-size:13px;font-family:'Liberation Serif';font-size:13px;color:#000;-webkit-text-stroke:0.1px #000">1</div>
<div class="t" style="left:2px;width:25px;text-align:center;top:250px;font-size:13px;font-family:'Liberation Serif';font-size:13px;color:#000;-webkit-text-stroke:0.1px #000">2</div>
<div class="t" style="left:2px;width:25px;text-align:center;top:267px;font-size:13px;font-family:'Liberation Serif';font-size:13px;color:#000;-webkit-text-stroke:0.1px #000">3</div>
<div class="t" style="left:2px;width:25px;text-align:center;top:284px;font-size:13px;font-family:'Liberation Serif';font-size:13px;color:#000;-webkit-text-stroke:0.1px #000">4</div>
<div class="t" style="left:2px;width:25px;text-align:center;top:301px;font-size:13px;font-family:'Liberation Serif';font-size:13px;color:#000;-webkit-text-stroke:0.1px #000">5</div>
<div class="t" style="left:2px;width:25px;text-align:center;top:318px;font-size:13px;font-family:'Liberation Serif';font-size:13px;color:#000;-webkit-text-stroke:0.1px #000">6</div>
<div class="t" style="left:2px;width:25px;text-align:center;top:335px;font-size:13px;font-family:'Liberation Serif';font-size:13px;color:#000;-webkit-text-stroke:0.1px #000">7</div>
<div class="t" style="left:2px;width:25px;text-align:center;top:352px;font-size:13px;font-family:'Liberation Serif';font-size:13px;color:#000;-webkit-text-stroke:0.1px #000">8</div>
<div class="t" style="left:2px;width:25px;text-align:center;top:369px;font-size:13px;font-family:'Liberation Serif';font-size:13px;color:#000;-webkit-text-stroke:0.1px #000">9</div>
<div class="t" style="left:2px;width:25px;text-align:center;top:386px;font-size:13px;font-family:'Liberation Serif';font-size:13px;color:#000;-webkit-text-stroke:0.1px #000">10</div>
<div class="t" style="left:2px;width:25px;text-align:center;top:403px;font-size:13px;font-family:'Liberation Serif';font-size:13px;color:#000;-webkit-text-stroke:0.1px #000">11</div>
<div class="t" style="left:2px;width:25px;text-align:center;top:420px;font-size:13px;font-family:'Liberation Serif';font-size:13px;color:#000;-webkit-text-stroke:0.1px #000">12</div>
<div class="t" style="left:2px;width:25px;text-align:center;top:437px;font-size:13px;font-family:'Liberation Serif';font-size:13px;color:#000;-webkit-text-stroke:0.1px #000">13</div>
<div class="t" style="left:2px;width:25px;text-align:center;top:454px;font-size:13px;font-family:'Liberation Serif';font-size:13px;color:#000;-webkit-text-stroke:0.1px #000">14</div>
<div class="t" style="left:2px;width:25px;text-align:center;top:471px;font-size:13px;font-family:'Liberation Serif';font-size:13px;color:#000;-webkit-text-stroke:0.1px #000">15</div>
<div class="t" style="left:2px;width:25px;text-align:center;top:488px;font-size:13px;font-family:'Liberation Serif';font-size:13px;color:#000;-webkit-text-stroke:0.1px #000">16</div>
<div class="t" style="left:2px;width:25px;text-align:center;top:505px;font-size:13px;font-family:'Liberation Serif';font-size:13px;color:#000;-webkit-text-stroke:0.1px #000">17</div>
<div class="t" style="left:2px;width:25px;text-align:center;top:522px;font-size:13px;font-family:'Liberation Serif';font-size:13px;color:#000;-webkit-text-stroke:0.1px #000">18</div>
<div class="t" style="left:2px;width:25px;text-align:center;top:539px;font-size:13px;font-family:'Liberation Serif';font-size:13px;color:#000;-webkit-text-stroke:0.1px #000">19</div>
<div class="t" style="left:2px;width:25px;text-align:center;top:556px;font-size:13px;font-family:'Liberation Serif';font-size:13px;color:#000;-webkit-text-stroke:0.1px #000">20</div>
<div class="t" style="left:2px;width:25px;text-align:center;top:573px;font-size:13px;font-family:'Liberation Serif';font-size:13px;color:#000;-webkit-text-stroke:0.1px #000">21</div>
<div class="t" style="left:2px;width:25px;text-align:center;top:590px;font-size:13px;font-family:'Liberation Serif';font-size:13px;color:#000;-webkit-text-stroke:0.1px #000">22</div>
<div class="t" style="left:2px;width:25px;text-align:center;top:607px;font-size:13px;font-family:'Liberation Serif';font-size:13px;color:#000;-webkit-text-stroke:0.1px #000">23</div>
<div class="t" style="left:2px;width:25px;text-align:center;top:624px;font-size:13px;font-family:'Liberation Serif';font-size:13px;color:#000;-webkit-text-stroke:0.1px #000">24</div>
<div class="t" style="left:2px;width:25px;text-align:center;top:641px;font-size:13px;font-family:'Liberation Serif';font-size:13px;color:#000;-webkit-text-stroke:0.1px #000">25</div>
<div class="t" style="left:2px;width:25px;text-align:center;top:658px;font-size:13px;font-family:'Liberation Serif';font-size:13px;color:#000;-webkit-text-stroke:0.1px #000">26</div>
<div class="t" style="left:2px;width:25px;text-align:center;top:675px;font-size:13px;font-family:'Liberation Serif';font-size:13px;color:#000;-webkit-text-stroke:0.1px #000">27</div>
<div class="t" style="left:2px;width:25px;text-align:center;top:692px;font-size:13px;font-family:'Liberation Serif';font-size:13px;color:#000;-webkit-text-stroke:0.1px #000">28</div>
<div class="t" style="left:2px;width:25px;text-align:center;top:709px;font-size:13px;font-family:'Liberation Serif';font-size:13px;color:#000;-webkit-text-stroke:0.1px #000">29</div>
<div class="t" style="left:2px;width:25px;text-align:center;top:726px;font-size:13px;font-family:'Liberation Serif';font-size:13px;color:#000;-webkit-text-stroke:0.1px #000">30</div>
<div class="t" style="left:2px;width:25px;text-align:center;top:743px;font-size:13px;font-family:'Liberation Serif';font-size:13px;color:#000;-webkit-text-stroke:0.1px #000">31</div>
<div class="t" style="left:2px;width:25px;text-align:center;top:760px;font-size:13px;font-family:'Liberation Serif';font-size:13px;color:#000;-webkit-text-stroke:0.1px #000">32</div>
<div class="t" style="left:2px;width:25px;text-align:center;top:777px;font-size:13px;font-family:'Liberation Serif';font-size:13px;color:#000;-webkit-text-stroke:0.1px #000">33</div>
<div class="t" style="left:2px;width:25px;text-align:center;top:794px;font-size:13px;font-family:'Liberation Serif';font-size:13px;color:#000;-webkit-text-stroke:0.1px #000">34</div>
<div class="t" style="left:2px;width:25px;text-align:center;top:811px;font-size:13px;font-family:'Liberation Serif';font-size:13px;color:#000;-webkit-text-stroke:0.1px #000">35</div>
<div class="t" style="left:2px;width:25px;text-align:center;top:828px;font-size:13px;font-family:'Liberation Serif';font-size:13px;color:#000;-webkit-text-stroke:0.1px #000">36</div>
<div class="t" style="left:2px;width:25px;text-align:center;top:845px;font-size:13px;font-family:'Liberation Serif';font-size:13px;color:#000;-webkit-text-stroke:0.1px #000">37</div>
<div class="t" style="left:2px;width:25px;text-align:center;top:862px;font-size:13px;font-family:'Liberation Serif';font-size:13px;color:#000;-webkit-text-stroke:0.1px #000">38</div>
<div class="t" style="left:2px;width:25px;text-align:center;top:879px;font-size:13px;font-family:'Liberation Serif';font-size:13px;color:#000;-webkit-text-stroke:0.1px #000">39</div>
<div class="t" style="left:2px;width:25px;text-align:center;top:896px;font-size:13px;font-family:'Liberation Serif';font-size:13px;color:#000;-webkit-text-stroke:0.1px #000">40</div>
<div class="t" style="left:2px;width:25px;text-align:center;top:913px;font-size:13px;font-family:'Liberation Serif';font-size:13px;color:#000;-webkit-text-stroke:0.1px #000">41</div>
<div class="t" style="left:2px;width:25px;text-align:center;top:930px;font-size:13px;font-family:'Liberation Serif';font-size:13px;color:#000;-webkit-text-stroke:0.1px #000">42</div>
<div class="t" style="left:2px;width:25px;text-align:center;top:947px;font-size:13px;font-family:'Liberation Serif';font-size:13px;color:#000;-webkit-text-stroke:0.1px #000">43</div>
<div class="t" style="left:2px;width:25px;text-align:center;top:964px;font-size:13px;font-family:'Liberation Serif';font-size:13px;color:#000;-webkit-text-stroke:0.1px #000">44</div>
<div class="t" style="left:2px;width:25px;text-align:center;top:981px;font-size:13px;font-family:'Liberation Serif';font-size:13px;color:#000;-webkit-text-stroke:0.1px #000">45</div>
<div class="ab" style="left:0;top:989px;width:849px;height:4px;background:#e6e6e6;border-top:1px solid #9b9b9b"></div>
<svg class="ab" style="left:0;top:0" width="867" height="993"><rect x="90.5" y="293.5" width="556" height="462" fill="none" stroke="#8f8f8f" stroke-width="1"/><rect x="272" y="311" width="195" height="26" fill="#fff"/><rect x="202" y="359" width="359" height="360" fill="#d9d9d9"/><rect x="202" y="359" width="359" height="360" fill="none" stroke="#000" stroke-width="3.6" stroke-dasharray="10.5 3.8"/><rect x="211" y="510.1" width="20" height="208.5" fill="#4f81bd"/><rect x="231" y="467.0" width="20" height="251.7" fill="#c0504d"/><rect x="271" y="409.4" width="20" height="309.2" fill="#4f81bd"/><rect x="291" y="484.2" width="20" height="234.4" fill="#c0504d"/><rect x="331" y="567.6" width="20" height="151.0" fill="#4f81bd"/><rect x="351" y="438.2" width="20" height="280.4" fill="#c0504d"/><rect x="391" y="482.0" width="20" height="236.6" fill="#4f81bd"/><rect x="411" y="441.1" width="20" height="277.5" fill="#c0504d"/><rect x="451" y="546.0" width="20" height="172.6" fill="#4f81bd"/><rect x="471" y="528.8" width="20" height="189.8" fill="#c0504d"/><rect x="511" y="502.9" width="20" height="215.7" fill="#4f81bd"/><rect x="531" y="536.0" width="20" height="182.6" fill="#c0504d"/><rect x="169.5" y="340.7" width="29.5" height="383.5" rx="3" fill="none" stroke="#d9261c" stroke-width="3"/><line x1="172.5" y1="344.8" x2="201.5" y2="344.8" stroke="#9fb7d6" stroke-width="1"/><circle cx="172.5" cy="344.8" r="1.8" fill="#fff" stroke="#4a7fc1" stroke-width="1"/><circle cx="201.5" cy="344.8" r="1.8" fill="#fff" stroke="#4a7fc1" stroke-width="1"/><circle cx="201.5" cy="723.9" r="1.8" fill="#fff" stroke="#4a7fc1" stroke-width="1"/><rect x="85.3" y="288.3" width="10.4" height="10.4" rx="2" fill="#8a8a8a"/><circle cx="90.5" cy="293.5" r="4.4" fill="#fff"/><rect x="85.3" y="519.3" width="10.4" height="10.4" rx="2" fill="#8a8a8a"/><circle cx="90.5" cy="524.5" r="4.4" fill="#fff"/><rect x="85.3" y="750.3" width="10.4" height="10.4" rx="2" fill="#8a8a8a"/><circle cx="90.5" cy="755.5" r="4.4" fill="#fff"/><rect x="363.3" y="288.3" width="10.4" height="10.4" rx="2" fill="#8a8a8a"/><circle cx="368.5" cy="293.5" r="4.4" fill="#fff"/><rect x="363.3" y="750.3" width="10.4" height="10.4" rx="2" fill="#8a8a8a"/><circle cx="368.5" cy="755.5" r="4.4" fill="#fff"/><rect x="641.3" y="288.3" width="10.4" height="10.4" rx="2" fill="#8a8a8a"/><circle cx="646.5" cy="293.5" r="4.4" fill="#fff"/><rect x="641.3" y="519.3" width="10.4" height="10.4" rx="2" fill="#8a8a8a"/><circle cx="646.5" cy="524.5" r="4.4" fill="#fff"/><rect x="641.3" y="750.3" width="10.4" height="10.4" rx="2" fill="#8a8a8a"/><circle cx="646.5" cy="755.5" r="4.4" fill="#fff"/><rect x="593" y="548" width="6" height="6" fill="#4f81bd"/><rect x="593" y="568" width="6" height="6" fill="#c0504d"/><rect x="660.5" y="292.5" width="27" height="27" fill="#fff" stroke="#ababab"/><path d="M663 305.5 H684.5 M673.5 295 V316" stroke="#2f8a4f" stroke-width="1"/><rect x="660.5" y="330.5" width="27" height="27" fill="#fff" stroke="#ababab"/><path d="M684.6 334.6 Q686 336 684.5 337.5 L674 348 L671.5 346 L682 335.5 Q683.5 334 684.6 334.6 Z" fill="#fff" stroke="#404040" stroke-width="1"/><path d="M671.5 345.8 Q668 346 667.5 349.5 Q666 351 662.5 351.5 Q667 353.5 671.5 351.5 Q674.5 350 674.2 348 Z" fill="#6fa8e6" stroke="#2f6cb0" stroke-width="0.8"/></svg>
<div class="ab" style="left:201px;top:489.5px;width:42px;height:18px;background:#fff;border:1px solid #c8c8c8"></div>
<div class="t" style="left:201px;top:493.5px;width:42px;text-align:center;font-size:10.3px;color:#404040">经理, 29</div>
<div class="ab" style="left:219px;top:446.5px;width:44px;height:18px;background:#fff;border:1px solid #c8c8c8"></div>
<div class="t" style="left:219px;top:450.5px;width:44px;text-align:center;font-size:10.3px;color:#404040">职员, 35</div>
<div class="ab" style="left:258.6px;top:388px;width:45px;height:18px;background:#fff;border:1px solid #c8c8c8"></div>
<div class="t" style="left:258.6px;top:392.0px;width:45px;text-align:center;font-size:10.3px;color:#404040">经理, 43</div>
<div class="ab" style="left:278.6px;top:462.5px;width:44.5px;height:18px;background:#fff;border:1px solid #c8c8c8"></div>
<div class="t" style="left:278.6px;top:466.5px;width:44.5px;text-align:center;font-size:10.3px;color:#404040">职员, 33</div>
<div class="ab" style="left:319px;top:546px;width:44.3px;height:18px;background:#fff;border:1px solid #c8c8c8"></div>
<div class="t" style="left:319px;top:550.0px;width:44.3px;text-align:center;font-size:10.3px;color:#404040">经理, 21</div>
<div class="ab" style="left:338.3px;top:417.3px;width:45.4px;height:17.5px;background:#fff;border:1px solid #c8c8c8"></div>
<div class="t" style="left:338.3px;top:421.05px;width:45.4px;text-align:center;font-size:10.3px;color:#404040">职员, 39</div>
<div class="ab" style="left:386.7px;top:460px;width:29px;height:18px;background:#fff;border:1px solid #c8c8c8"></div>
<div class="t" style="left:386.7px;top:464.0px;width:29px;text-align:center;font-size:10.3px;color:#404040">经理</div>
<div class="ab" style="left:398.3px;top:419.2px;width:45.4px;height:18px;background:#fff;border:1px solid #c8c8c8"></div>
<div class="t" style="left:398.3px;top:423.2px;width:45.4px;text-align:center;font-size:10.3px;color:#404040">职员, 39</div>
<div class="ab" style="left:458.8px;top:507.2px;width:44.6px;height:18px;background:#fff;border:1px solid #c8c8c8"></div>
<div class="t" style="left:458.8px;top:511.20000000000005px;width:44.6px;text-align:center;font-size:10.3px;color:#404040">职员, 26</div>
<div class="ab" style="left:438.6px;top:525px;width:45px;height:18px;background:#fff;border:1px solid #c8c8c8"></div>
<div class="t" style="left:438.6px;top:529.0px;width:45px;text-align:center;font-size:10.3px;color:#404040">经理, 24</div>
<div class="ab" style="left:498.9px;top:482.5px;width:44.3px;height:18px;background:#fff;border:1px solid #c8c8c8"></div>
<div class="t" style="left:498.9px;top:486.5px;width:44.3px;text-align:center;font-size:10.3px;color:#404040">经理, 30</div>
<div class="ab" style="left:518.5px;top:515px;width:45px;height:18px;background:#fff;border:1px solid #c8c8c8"></div>
<div class="t" style="left:518.5px;top:519.0px;width:45px;text-align:center;font-size:10.3px;color:#404040">职员, 26</div>
<div class="t" style="left:279px;top:316.5px;font-size:16px;letter-spacing:0.85px;color:#303030">不同部门岗位的平均年龄</div>
<div class="t" style="left:166px;top:347.69999999999993px;width:30px;height:12px;line-height:12px;text-align:center;font-size:10.5px;letter-spacing:-0.4px;color:#595959;transform:rotate(45deg)">50</div>
<div class="t" style="left:166px;top:419.5999999999999px;width:30px;height:12px;line-height:12px;text-align:center;font-size:10.5px;letter-spacing:-0.4px;color:#595959;transform:rotate(45deg)">40</div>
<div class="t" style="left:166px;top:491.4999999999999px;width:30px;height:12px;line-height:12px;text-align:center;font-size:10.5px;letter-spacing:-0.4px;color:#595959;transform:rotate(45deg)">30</div>
<div class="t" style="left:166px;top:563.4px;width:30px;height:12px;line-height:12px;text-align:center;font-size:10.5px;letter-spacing:-0.4px;color:#595959;transform:rotate(45deg)">20</div>
<div class="t" style="left:166px;top:635.3px;width:30px;height:12px;line-height:12px;text-align:center;font-size:10.5px;letter-spacing:-0.4px;color:#595959;transform:rotate(45deg)">10</div>
<div class="t" style="left:166px;top:707.1999999999999px;width:30px;height:12px;line-height:12px;text-align:center;font-size:10.5px;letter-spacing:-0.4px;color:#595959;transform:rotate(45deg)">0</div>
<div class="t" style="left:141px;top:488px;font-size:13px;color:#595959;line-height:12.5px;white-space:normal;width:14px">年<br>龄</div>
<div class="t" style="left:206px;width:50px;text-align:center;top:727px;font-size:11px;color:#595959">办公室</div>
<div class="t" style="left:266px;width:50px;text-align:center;top:727px;font-size:11px;color:#595959">技术部</div>
<div class="t" style="left:326px;width:50px;text-align:center;top:727px;font-size:11px;color:#595959">产品部</div>
<div class="t" style="left:386px;width:50px;text-align:center;top:727px;font-size:11px;color:#595959">交付部</div>
<div class="t" style="left:446px;width:50px;text-align:center;top:727px;font-size:11px;color:#595959">商务部</div>
<div class="t" style="left:506px;width:50px;text-align:center;top:727px;font-size:11px;color:#595959">销售部</div>
<div class="t" style="left:369.5px;top:736px;font-size:12px;letter-spacing:-0.2px;color:#404040">部门</div>
<div class="ab" style="left:96px;top:300px;width:40px;height:16px;background:linear-gradient(#ececec,#c9c9c9)"></div>
<div class="t" style="left:100px;top:303px;font-size:10px;color:#1a1a1a">性别</div>
<svg class="ab" style="left:0;top:0" width="700" height="760"><path d="M124.5 306.3 H131 L127.75 309.8 Z" fill="#333"/><path d="M129 737.5 H136 L132.5 741.5 Z" fill="#333"/><path d="M617.5 533.5 H622.5 L620 536.5 Z" fill="#333"/><path d="M624 527.5 H634.5 L630.5 532.5 V537.5 L628 536 V532.5 Z" fill="#6d6d6d"/></svg>
<div class="ab" style="left:100px;top:323px;width:78px;height:15px;background:linear-gradient(#ececec,#c9c9c9)"></div>
<div class="t" style="left:104px;top:326px;font-size:10px;color:#1a1a1a">平均值项: 年龄</div>
<div class="ab" style="left:100px;top:732px;width:41px;height:16px;background:linear-gradient(#ececec,#c9c9c9)"></div>
<div class="t" style="left:104px;top:735px;font-size:10px;color:#1a1a1a">部门</div>
<div class="ab" style="left:588px;top:524px;width:50px;height:16px;background:linear-gradient(#ececec,#c9c9c9)"></div>
<div class="t" style="left:592px;top:527px;font-size:10px;color:#1a1a1a">岗位</div>
<div class="t" style="left:601px;top:544px;font-size:11px;color:#404040">经理</div>
<div class="t" style="left:601px;top:564px;font-size:11px;color:#404040">职员</div>
<svg class="ab" style="left:0;top:0" width="700" height="760"><path d="M124.5 306.3 H131 L127.75 309.8 Z" fill="#333"/><path d="M129 737.5 H136 L132.5 741.5 Z" fill="#333"/><path d="M617.5 533.5 H622.5 L620 536.5 Z" fill="#333"/><path d="M624 527.5 H634.5 L630.5 532.5 V537.5 L628 536 V532.5 Z" fill="#6d6d6d"/></svg>
<svg class="ab" style="left:0;top:170px" width="1151" height="40" viewBox="0 170 1151 40" fill="none">
<path d="M93.8 187.5 H100.9 L97.35 191.5 Z" fill="#555"/>
<g fill="#aaa"><circle cx="124" cy="183" r="0.9"/><circle cx="124" cy="189.5" r="0.9"/><circle cx="124" cy="196" r="0.9"/></g>
<path d="M153 185 L162.5 194.5 M162.5 185 L153 194.5" stroke="#b4b4b4" stroke-width="1.3"/>
<path d="M188 190 L192.5 194.5 L200.5 185.5" stroke="#bdbdbd" stroke-width="2.2"/>
<path d="M1135 187.3 L1138.4 191.2 L1141.8 187.3" stroke="#b0b0b0" stroke-width="1.8"/>
</svg>
<div class="t" style="left:224px;top:182px;font-size:14px;font-family:'Liberation Serif';font-style:italic;font-weight:bold;color:#666">f<span style="font-size:11px">x</span></div>
<svg class="ab" style="left:867px;top:210px" width="284" height="500" viewBox="867 210 284 500" fill="none">
<path d="M1082.5 238 H1090.5 L1086.5 242.5 Z" fill="#555"/>
<path d="M1123.5 234.5 L1132 243 M1132 234.5 L1123.5 243" stroke="#404040" stroke-width="1.6"/>
<path d="M954.5 275 L959.5 280 L964.5 275" stroke="#5b9bd5" stroke-width="1.3"/>
<!-- fill bucket -->
<path d="M888.5 310 L898 300.5 L907.5 310 L898 319.5 Z" fill="#fff" stroke="#505050" stroke-width="1.3" stroke-linejoin="round"/>
<path d="M895 302.5 Q895 299 898 299 Q900.5 299 900.5 302 V307" stroke="#505050" stroke-width="1.1"/>
<circle cx="900.5" cy="307.5" r="1.3" fill="#505050"/>
<path d="M904 306.5 Q910 305 911 312 L909.5 318 L907.5 311" fill="#606060" stroke="#606060" stroke-width="1"/>
<!-- pentagon -->
<path d="M939.2 299.5 L948.5 306.5 L945 317.5 H933.5 L930 306.5 Z" fill="#fff" stroke="#505050" stroke-width="1.3" stroke-linejoin="round"/>
<path d="M933.5 318.5 H945" stroke="#8a8a8a" stroke-width="1.2"/><path d="M932.5 320.5 H946" stroke="#c4c4c4" stroke-width="1.5"/>
<!-- selected icon -->
<rect x="964" y="296" width="30" height="30" fill="#b3b3b3"/>
<path d="M974.5 300.5 H989 M974.5 298.5 V302.5 M989 298.5 V302.5" stroke="#505050" stroke-width="1"/>
<path d="M969.5 306 V321 M968 306 H971 M968 321 H971" stroke="#505050" stroke-width="1"/>
<rect x="974.5" y="306" width="14.5" height="15" fill="#217346"/>
<path d="M981.75 308.5 V318.5 M976.5 313.5 H987 M980 310 L981.75 308.3 L983.5 310 M980 317 L981.75 318.7 L983.5 317 M978.2 311.7 L976.5 313.5 L978.2 315.2 M985.3 311.7 L987 313.5 L985.3 315.2" stroke="#fff" stroke-width="0.9"/>
<!-- bar chart -->
<rect x="1009.5" y="306" width="5.5" height="15" fill="#6e6e6e"/>
<rect x="1016.5" y="300" width="5.5" height="21" fill="#6e6e6e"/>
<rect x="1023.5" y="303" width="5.5" height="18" fill="#6e6e6e"/>
<!-- separator w/ notch -->
<path d="M881 339.5 H973.5 L979.5 333.5 L985.5 339.5 H1136" stroke="#c8c8c8" stroke-width="1"/>
<path d="M890.5 356.6 H895.6 V351.5 Z" fill="#444"/>
</svg>
<div class="t" style="left:883px;top:232px;font-size:21px;color:#217346">设置坐标轴格式</div>
<div class="t" style="left:887px;top:271px;font-size:12px;color:#262626;font-weight:bold">坐标轴选项</div>
<div class="t" style="left:981px;top:271px;font-size:12px;color:#262626">文本选项</div>
<div class="t" style="left:904px;top:349px;font-size:12px;color:#217346;font-weight:bold">对齐方式</div>
<div class="t" style="left:904px;top:375px;font-size:12px;color:#262626">垂直对齐方式(<u>V</u>)</div>
<div class="t" style="left:904px;top:403px;font-size:12px;color:#262626">文字方向(<u>X</u>)</div>
<div class="t" style="left:915px;top:434px;font-size:12px;color:#262626">自定义角度(<u>U</u>)</div>
<div class="ab" style="left:1018px;top:370px;width:99px;height:23px;background:#fff;border:1px solid #c6c6c6"></div>
<div class="t" style="left:1024px;top:375px;font-size:12px;color:#262626">中部居中</div>
<svg class="ab" style="left:1100px;top:370px" width="16" height="23"><path d="M4.4 10 H11.7 L8 13.5 Z" fill="#555"/></svg>
<div class="ab" style="left:1018px;top:399px;width:99px;height:23px;background:#fff;border:1px solid #c6c6c6"></div>
<div class="t" style="left:1024px;top:404px;font-size:12px;color:#262626">横排</div>
<svg class="ab" style="left:1100px;top:399px" width="16" height="23"><path d="M4.4 10 H11.7 L8 13.5 Z" fill="#555"/></svg>
<div class="ab" style="left:1014px;top:428px;width:103px;height:26px;background:#fff;border:1px solid #4d7a5c"></div>
<div class="t" style="left:1021px;top:434px;font-size:12px;color:#262626">45</div>
<div class="ab" style="left:1035px;top:433px;width:1px;height:15px;background:#000"></div>
<svg class="ab" style="left:1100px;top:428px" width="16" height="26" fill="none"><path d="M5.5 9 L8 6.5 L10.5 9 M5.5 17 L8 19.5 L10.5 17" stroke="#666" stroke-width="1"/></svg>
<div class="ab" style="left:918.5px;top:424.5px;width:205px;height:33.5px;border:3px solid #d9261c;border-radius:3px"></div>
<div class="ab" style="left:905px;top:463px;width:11px;height:11px;background:#fff"></div>
<div class="t" style="left:922px;top:462px;font-size:12px;color:#a0a0a0">根据文字调整形状大小(<u>F</u>)</div>
<div class="ab" style="left:905px;top:489px;width:12px;height:12px;background:#fff;border:1px solid #d0d0d0"></div>
<div class="ab" style="left:908px;top:492px;width:6px;height:6px;background:#b0b0b0"></div>
<div class="t" style="left:922px;top:489px;font-size:12px;color:#a0a0a0">允许文本溢出形状(<u>O</u>)</div>
<div class="t" style="left:904px;top:521px;font-size:12px;color:#a0a0a0">左边距(<u>L</u>)</div>
<div class="ab" style="left:1015px;top:515px;width:101px;height:23px;background:#ececec;border:1px solid #e3e3e3"></div>
<div class="t" style="left:1021px;top:520px;font-size:12.5px;color:#a0a0a0">0.25 厘米</div>
<svg class="ab" style="left:1100px;top:515px" width="16" height="23" fill="none"><path d="M5.5 7.5 L8 5 L10.5 7.5 M5.5 15.5 L8 18 L10.5 15.5" stroke="#c8c8c8" stroke-width="1"/></svg>
<div class="t" style="left:904px;top:553px;font-size:12px;color:#a0a0a0">右边距(<u>R</u>)</div>
<div class="ab" style="left:1015px;top:547px;width:101px;height:23px;background:#ececec;border:1px solid #e3e3e3"></div>
<div class="t" style="left:1021px;top:552px;font-size:12.5px;color:#a0a0a0">0.25 厘米</div>
<svg class="ab" style="left:1100px;top:547px" width="16" height="23" fill="none"><path d="M5.5 7.5 L8 5 L10.5 7.5 M5.5 15.5 L8 18 L10.5 15.5" stroke="#c8c8c8" stroke-width="1"/></svg>
<div class="t" style="left:904px;top:585px;font-size:12px;color:#a0a0a0">上边距(<u>T</u>)</div>
<div class="ab" style="left:1015px;top:579px;width:101px;height:23px;background:#ececec;border:1px solid #e3e3e3"></div>
<div class="t" style="left:1021px;top:584px;font-size:12.5px;color:#a0a0a0">0.13 厘米</div>
<svg class="ab" style="left:1100px;top:579px" width="16" height="23" fill="none"><path d="M5.5 7.5 L8 5 L10.5 7.5 M5.5 15.5 L8 18 L10.5 15.5" stroke="#c8c8c8" stroke-width="1"/></svg>
<div class="t" style="left:904px;top:617px;font-size:12px;color:#a0a0a0">下边距(<u>B</u>)</div>
<div class="ab" style="left:1015px;top:611px;width:101px;height:23px;background:#ececec;border:1px solid #e3e3e3"></div>
<div class="t" style="left:1021px;top:616px;font-size:12.5px;color:#a0a0a0">0.13 厘米</div>
<svg class="ab" style="left:1100px;top:611px" width="16" height="23" fill="none"><path d="M5.5 7.5 L8 5 L10.5 7.5 M5.5 15.5 L8 18 L10.5 15.5" stroke="#c8c8c8" stroke-width="1"/></svg>
<div class="ab" style="left:905px;top:644px;width:12px;height:12px;background:#fff;border:1px solid #d8d8d8"></div>
<svg class="ab" style="left:905px;top:644px" width="12" height="12" fill="none"><path d="M2.5 6 L5 8.5 L9.5 3" stroke="#b0b0b0" stroke-width="1.2"/></svg>
<div class="t" style="left:922px;top:643px;font-size:12px;color:#a0a0a0">形状中的文字自动换行(<u>W</u>)</div>
<div class="ab" style="left:905px;top:670px;width:65px;height:23px;background:#fafafa;border:1px solid #e9e9e9"></div>
<div class="t" style="left:913px;top:675px;font-size:12px;color:#a0a0a0">分栏(<u>C</u>)...</div>
<div class="ab" style="left:105px;top:806px;width:152px;height:25px;background:#fff;border:1px solid #cfe0f0"></div>
<svg class="ab" style="left:70px;top:795px" width="200" height="45" viewBox="70 795 200 45">
<g transform="rotate(-12 94.7 816.7)"><rect x="82" y="804" width="25.5" height="25.5" rx="4" fill="#e85a26"/>
<path d="M101 810.5 Q95 808.5 89 810 Q86 812 88 815 Q90 817.5 96 817.5 Q100.5 818 100 821 Q98 824 88 822.5" fill="none" stroke="#fff" stroke-width="3.6" stroke-linecap="round"/></g>
<g fill="#1a6fcf">
<rect x="117.5" y="815" width="13.5" height="7" fill="none" stroke="#1a6fcf" stroke-width="2.2"/>
<rect x="123.1" y="812.7" width="2.4" height="13"/>
<circle cx="145" cy="817" r="1.6" fill="none" stroke="#1a6fcf" stroke-width="1.3"/>
<path d="M151 820 Q153.5 820 153 823 Q152 825 150 825.5 L150.5 824 Q151.5 823 150.5 822.5 Z"/>
<rect x="169.2" y="812.5" width="5.8" height="10" rx="2.9"/>
<path d="M167 818 Q167 824.5 172.1 824.5 Q177.2 824.5 177.2 818" fill="none" stroke="#1a6fcf" stroke-width="1.4"/>
<rect x="171.4" y="824.5" width="1.4" height="2.3"/><rect x="169" y="826.5" width="6.2" height="1.2"/>
<rect x="189" y="813.5" width="14.8" height="11.2" rx="1.5"/>
<path fill="#fff" d="M191.2 815.8 h1.8 v1.6 h-1.8z M194.2 815.8 h1.8 v1.6 h-1.8z M197.2 815.8 h1.8 v1.6 h-1.8z M200.2 815.8 h1.8 v1.6 h-1.8z M191.2 818.6 h1.8 v1.6 h-1.8z M194.2 818.6 h1.8 v1.6 h-1.8z M197.2 818.6 h1.8 v1.6 h-1.8z M200.2 818.6 h1.8 v1.6 h-1.8z M193 821.5 h7 v1.4 h-7z"/>
<path d="M213 815 L217 812.5 Q220.3 814.5 223.6 812.5 L227.7 815 L226 818.5 L224.5 818 V826 H215.8 V818 L214.5 818.5 Z"/>
<rect x="238.2" y="813" width="5.6" height="5.6" rx="1.8"/><rect x="245.2" y="813" width="5.6" height="5.6" rx="2.8"/>
<rect x="238.2" y="820" width="5.6" height="5.6" rx="1.8"/><rect x="245.2" y="820" width="5.6" height="5.6" rx="1.8"/>
</g></svg>
<div class="ab" style="left:0;top:35px;width:1px;height:958px;background:#aecdb9"></div>
<div class="ab" style="left:1px;top:35px;width:1px;height:958px;background:#46604f"></div>
<div class="ab" style="left:2px;top:35px;width:1px;height:958px;background:#e2f5e9"></div>
<div class="ab" style="left:849px;top:583px;width:15px;height:393px;background:#d9d9d9"></div>
<div class="ab" style="left:849px;top:218px;width:15px;height:15px;background:#fff;border:1px solid #c6c6c6"></div>
<div class="ab" style="left:849px;top:232px;width:15px;height:352px;background:#fff;border:1px solid #c6c6c6"></div>
<div class="ab" style="left:849px;top:975px;width:15px;height:15px;background:#fff;border:1px solid #c6c6c6"></div>
<svg class="ab" style="left:849px;top:218px" width="16" height="775"><path d="M3.5 9.5 H11.5 L7.5 5.5 Z" fill="#606060"/><path d="M3.5 763 H11.5 L7.5 767 Z" fill="#606060"/></svg>
<div class="ab" style="left:867px;top:216px;width:1px;height:777px;background:#c6c6c6"></div>
</body></html>
